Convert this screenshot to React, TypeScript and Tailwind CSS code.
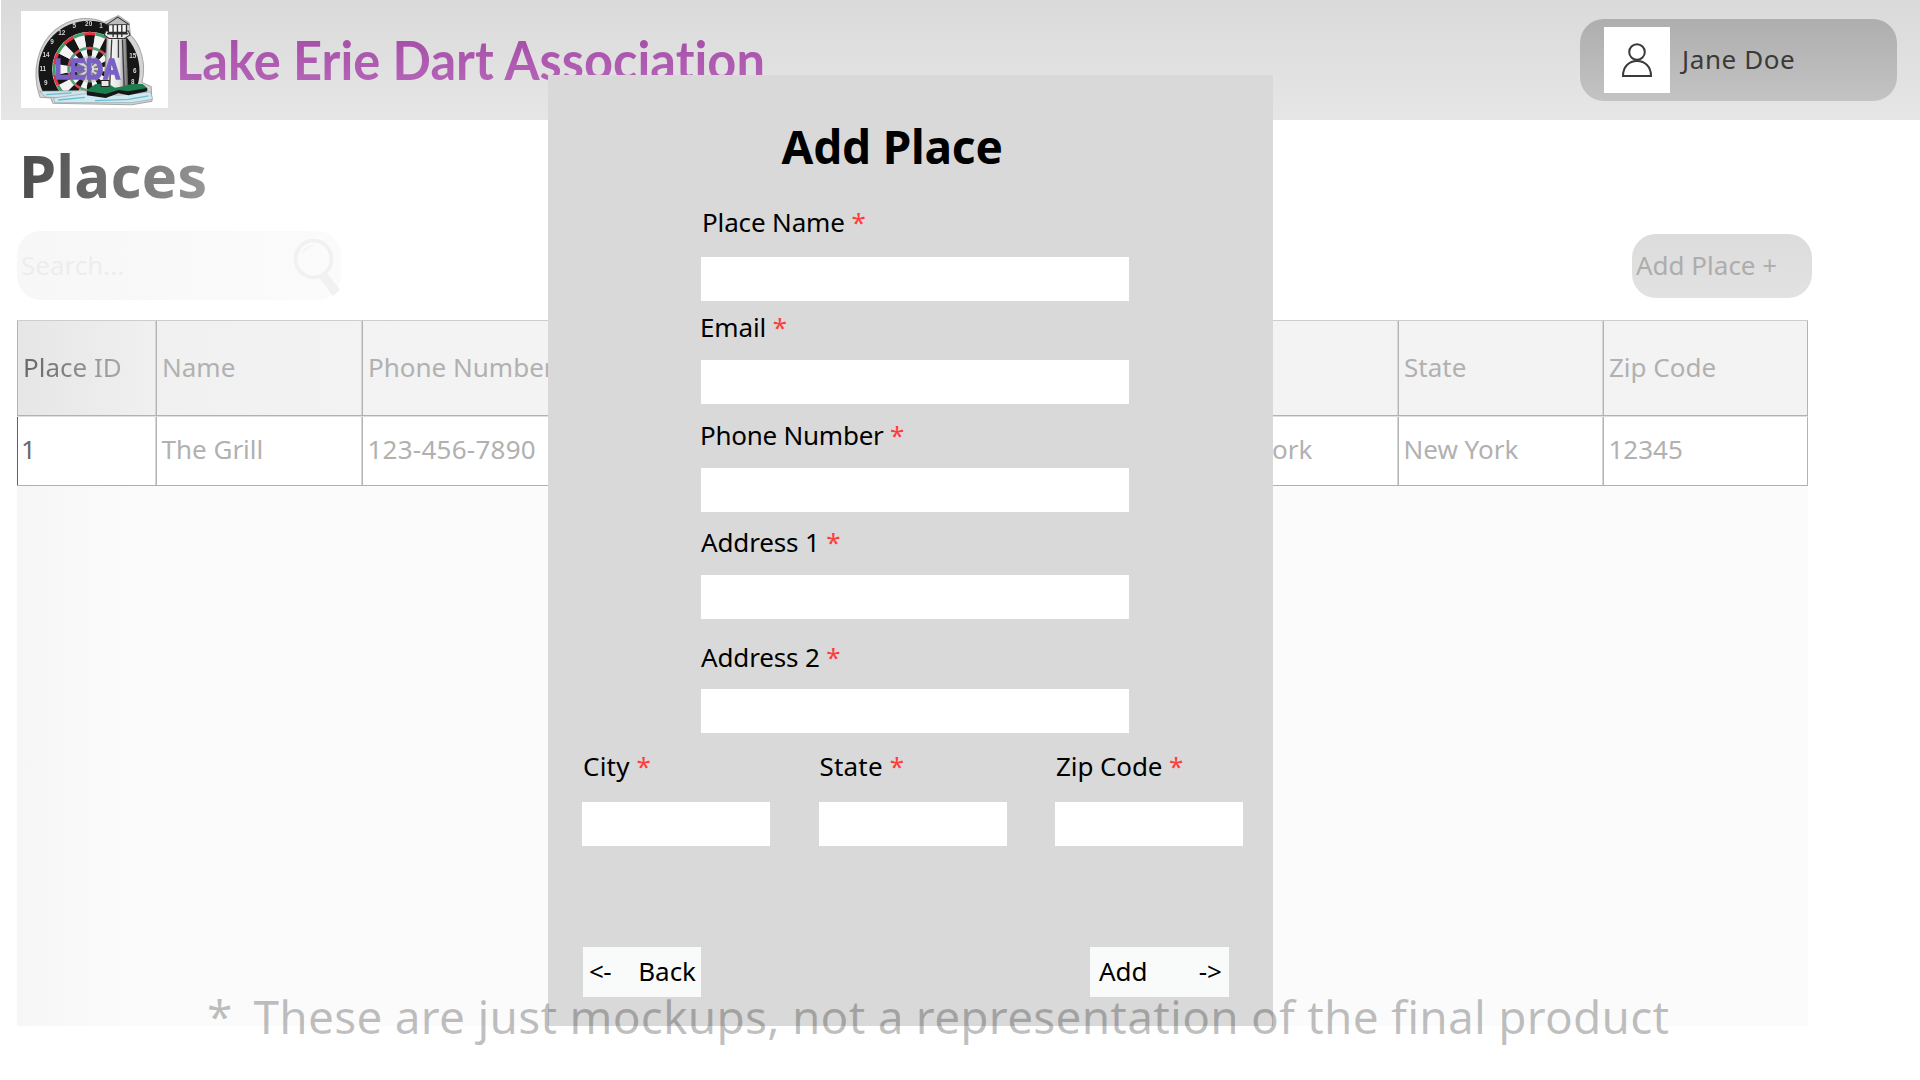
import React from 'react';

const wedges = Array.from({ length: 20 }, (_, i) => i);

function wedgePath(i: number, inner: number, outer: number) {
  const a0 = ((i * 18 - 9) * Math.PI) / 180;
  const a1 = ((i * 18 + 9) * Math.PI) / 180;
  const p = (r: number, a: number) => `${(Math.sin(a) * r).toFixed(1)} ${(-Math.cos(a) * r).toFixed(1)}`;
  return `M${p(inner, a0)}L${p(outer, a0)}A${outer} ${outer} 0 0 1 ${p(outer, a1)}L${p(inner, a1)}A${inner} ${inner} 0 0 0 ${p(inner, a0)}Z`;
}

const rimNumbers = [
  { n: '9', x: 83, y: 232 },
  { n: '11', x: 74, y: 190 },
  { n: '14', x: 84, y: 147 },
  { n: '9', x: 102, y: 110 },
  { n: '12', x: 131, y: 82 },
  { n: '5', x: 168, y: 61 },
  { n: '20', x: 211, y: 56 },
  { n: '1', x: 248, y: 60 },
  { n: '15', x: 343, y: 152 },
  { n: '6', x: 349, y: 194 },
  { n: '8', x: 343, y: 228 },
];

function Logo() {
  return (
    <svg viewBox="9 10 439 290" preserveAspectRatio="none" className="h-[97px] w-[147px] shrink-0 bg-white">
      <defs>
        <linearGradient id="tower" x1="0" x2="1" y1="0" y2="0">
          <stop offset="0" stopColor="#8f8f8f" />
          <stop offset="0.3" stopColor="#f6f6f6" />
          <stop offset="0.65" stopColor="#e2e2e2" />
          <stop offset="1" stopColor="#6c6c6c" />
        </linearGradient>
        <clipPath id="board">
          <rect x="40" y="20" width="350" height="230" />
        </clipPath>
        <filter id="soft">
          <feGaussianBlur stdDeviation="1.8" />
        </filter>
      </defs>
      <g filter="url(#soft)">
        <path
          d="M62 256C42 190 58 110 112 66C160 28 215 24 258 44L300 24L332 46L336 82C368 112 384 170 370 224L398 236L400 280L340 290L104 286L98 270L66 268Z"
          fill="#d4d4d4"
          stroke="#a8a8a8"
          strokeWidth="3"
        />
        <g clipPath="url(#board)">
          <circle cx="212" cy="190" r="151" fill="#131313" />
          <g transform="translate(214 184)">
            <circle r="112" fill="#efefef" />
            {wedges.map((i) => (
              <g key={i}>
                <path d={wedgePath(i, 12, 106)} fill={i % 2 === 0 ? '#161616' : '#f4f4f4'} />
                <path d={wedgePath(i, 102, 111)} fill={i % 2 === 0 ? '#e2323f' : '#3f9f68'} />
                <path d={wedgePath(i, 59, 67)} fill={i % 2 === 0 ? '#d94450' : '#4fa474'} />
              </g>
            ))}
            <circle r="40" fill="#bdbdbd" opacity="0.6" />
            <circle r="13" fill="#ddd" />
            <circle r="6" fill="#444" />
          </g>
        </g>
        {rimNumbers.map((r, i) => (
          <text key={i} x={r.x} y={r.y} textAnchor="middle" fontSize="19" fontWeight="700" fill="#d8d8d8" fontFamily="Liberation Sans">
            {r.n}
          </text>
        ))}
        <path d="M64 250L200 248L215 262L190 270L84 268Z" fill="#cfe3ea" stroke="#8d9aa0" strokeWidth="2" />
        <path d="M106 270L210 256L300 262L396 252L402 274L340 284L110 284Z" fill="#cde9f1" stroke="#9aa5a8" strokeWidth="2" />
        <path d="M120 276L200 268M230 278L330 274L390 264M84 260L160 255" stroke="#6cbccd" strokeWidth="4" fill="none" />
        <path d="M266 88L256 240H328L322 88Z" fill="url(#tower)" stroke="#777" strokeWidth="2" />
        <path d="M280 95L274 232M300 95V150M312 95L317 235" stroke="#3b3b3b" strokeWidth="4" />
        <path d="M258 82L262 70L330 70L334 82L318 92H272Z" fill="#e9e9e9" stroke="#333" strokeWidth="3" />
        <path d="M270 50H324V74H270ZM284 50V88M297 50V90M310 50V88M266 78H328" fill="#f4f4f4" stroke="#2a2a2a" strokeWidth="4" />
        <path d="M262 52L298 28L330 50Z" fill="#bcbcbc" stroke="#333" strokeWidth="3" />
        <path d="M206 246L232 228H272L290 240L340 228H372L386 240L380 250L330 256L300 252L262 264L206 258Z" fill="#1d7e50" />
        <path d="M206 250L262 258L300 246L330 250L386 240V250L330 262L300 256L262 270L206 262Z" fill="#141414" />
        <path d="M248 218H272V236H248Z" fill="#e8e8e8" stroke="#222" strokeWidth="3" />
        <text
          x="110"
          y="214"
          textLength="196"
          lengthAdjust="spacingAndGlyphs"
          fontSize="89"
          fontWeight="700"
          fill="#7a62c4"
          stroke="#7a62c4"
          strokeWidth="5"
          fontFamily="Liberation Sans"
        >
          LEDA
        </text>
      </g>
    </svg>
  );
}

function UserIcon() {
  return (
    <svg viewBox="0 0 66 66" className="h-[66px] w-[66px] shrink-0 bg-white" fill="none" stroke="#3a3a3a" strokeWidth="2">
      <circle cx="33" cy="25" r="7.8" />
      <path d="M19 49C19 39.5 25 34 33 34S47 39.5 47 49Z" />
    </svg>
  );
}

function Magnifier() {
  return (
    <svg viewBox="0 0 48 58" className="mt-0.5 h-[58px] w-12">
      <ellipse cx="20.5" cy="21" rx="18" ry="18.5" fill="none" stroke="#f1f1f1" strokeWidth="3.6" />
      <path d="M8 17C11 10 15 8 21 6.5C15 10 12 12 8 17Z" fill="#f1f1f1" />
      <path d="M26 39.5L34 35L47 52L40 58Z" fill="#f1f1f1" />
    </svg>
  );
}

const columns = [
  { head: 'Place ID', value: '1' },
  { head: 'Name', value: 'The Grill' },
  { head: 'Phone Number', value: '123-456-7890' },
  { head: 'Email', value: '' },
  { head: 'Address 1', value: '' },
  { head: 'Address 2', value: '' },
  { head: 'City', value: 'New York' },
  { head: 'State', value: 'New York' },
  { head: 'Zip Code', value: '12345' },
];

const tableGrid = 'grid grid-cols-[139px_206px_206px_208px_208px_208px_206px_205px_205px]';

function PlacesTable() {
  return (
    <div className="mt-[20px] h-[706px] w-[1791px] bg-[linear-gradient(90deg,#f6f6f6,#f9f9f9_60px,#fbfbfb_140px)]">
      <div className={`${tableGrid} h-24 border-b border-t border-b-[#b2b2b2] border-t-[#cdcdcd] bg-[linear-gradient(90deg,#e6e6e6,#f1f1f1_150px,#f3f3f3_400px)]`}>
        {columns.map((c, i) => (
          <div key={c.head} className="flex items-center border-l border-r border-l-[#b4b4b4] border-r-[#d6d6d6] pb-0.5 pl-[5px] last:border-r-[#b4b4b4]">
            <span className={i === 0 ? 'whitespace-nowrap bg-[linear-gradient(90deg,#666,#a8a8a8)] bg-clip-text text-transparent' : 'whitespace-nowrap text-[#b1b1b1]'}>{c.head}</span>
          </div>
        ))}
      </div>
      <div className={`${tableGrid} h-[70px] border-b border-t border-b-[#b0b0b0] border-t-[#dedede] bg-white`}>
        {columns.map((c, i) => (
          <div key={c.head} className={i === 0 ? 'flex items-center border-l border-r border-l-[#606060] border-r-[#d6d6d6] pl-[3px] text-[#6a6a6a]' : 'flex items-center border-l border-r border-l-[#b4b4b4] border-r-[#d6d6d6] pl-[4.5px] text-[#b1b1b1] last:border-r-[#b4b4b4]'}>
            <span className={i === 2 ? 'whitespace-nowrap pb-1 tracking-[0.25px]' : 'whitespace-nowrap pb-1'}>{c.value}</span>
          </div>
        ))}
      </div>
    </div>
  );
}

function Label({ text, className }: { text: string; className: string }) {
  return (
    <div className={`whitespace-nowrap leading-9 text-black ${className}`}>
      {text} <span className="text-[#ff3b3b]">*</span>
    </div>
  );
}

function AddPlaceDialog() {
  return (
    <div className="absolute left-[548px] top-[75px] flex h-[950.5px] w-[724.5px] flex-col bg-[#d9d9d9]">
      <h2 className="ml-[233.5px] mt-[39px] text-[46px] font-bold leading-[64px] -tracking-[0.2px] text-black">Add Place</h2>
      <div className="ml-[153px] w-[428px]">
        <Label text="Place Name" className="ml-px mt-[26px] -tracking-[0.15px]" />
        <div className="mt-[17px] h-11 bg-white" />
        <Label text="Email" className="-ml-px mt-2 -tracking-[0.15px]" />
        <div className="mt-[15px] h-11 bg-white" />
        <Label text="Phone Number" className="-ml-px mt-[13px] -tracking-[0.25px]" />
        <div className="mt-[15px] h-11 bg-white" />
        <Label text="Address 1" className="mt-3 -tracking-[0.15px]" />
        <div className="mt-[15px] h-11 bg-white" />
        <Label text="Address 2" className="mt-5 -tracking-[0.15px]" />
        <div className="mt-[14px] h-11 bg-white" />
      </div>
      <div className="ml-[34px] mt-[15px] grid grid-cols-[188px_188px_188px] gap-x-[48.5px]">
        {['City', 'State', 'Zip Code'].map((t) => (
          <div key={t}>
            <Label text={t} className={t === 'Zip Code' ? 'ml-px -tracking-[0.1px]' : 'ml-px tracking-[0.2px]'} />
            <div className="mt-[18px] h-11 bg-white" />
          </div>
        ))}
      </div>
      <div className="ml-[35px] mr-[43.5px] mt-[101px] flex justify-between text-black">
        <button className="flex h-[50px] w-[118px] items-center justify-between bg-[#f9fbfa] pb-0.5 pl-1.5 pr-[5px]">
          <span className="tracking-[-0.5px]">&lt;-</span>
          <span>Back</span>
        </button>
        <button className="flex h-[50px] w-[139px] items-center justify-between bg-[#f9fbfa] pb-0.5 pl-[9px] pr-[7px]">
          <span>Add</span>
          <span>-&gt;</span>
        </button>
      </div>
    </div>
  );
}

export default function App() {
  return (
    <div className="relative h-[1080px] w-[1920px] overflow-hidden bg-white font-['Noto_Sans',sans-serif] text-[26px] leading-9">
      <header className="ml-px flex h-[120px] items-start bg-linear-to-b from-[#dadada] to-[#e6e6e6] pl-5">
        <div className="mt-[11px]">
          <Logo />
        </div>
        <h1 className="ml-2 mt-[27px] origin-left scale-x-[0.937] whitespace-nowrap bg-linear-to-b from-[#a650a8] from-20% to-[#b768bb] bg-clip-text font-['Lato',sans-serif] text-[54px] font-bold leading-[65px] text-transparent [font-variant-ligatures:none]">
          Lake Erie Dart Association
        </h1>
        <div className="ml-auto mr-[23px] mt-[19px] flex h-[82px] w-[317px] items-center rounded-[24px] bg-linear-to-b from-[#aeaeae] to-[#c3c3c3] pl-6">
          <UserIcon />
          <span className="ml-3 pb-[3px] tracking-[0.6px] text-[#3a3a3a]">Jane Doe</span>
        </div>
      </header>
      <main className="pl-[17px]">
        <h2 className="ml-0.5 mt-3.5 w-[191px] bg-[linear-gradient(100deg,#484848,#9a9a9a)] bg-clip-text text-[60px] font-bold leading-[82px] tracking-[0.1px] text-transparent">Places</h2>
        <div className="mt-[15px] flex w-[1795px] items-start justify-between">
          <div className="flex h-[69px] w-[324px] items-center justify-between rounded-[24px] bg-[linear-gradient(90deg,#f7f7f7,#fbfbfb)] pl-1 pr-0">
            <span className="pb-0.5 text-[#ededed]">Search...</span>
            <Magnifier />
          </div>
          <button className="mt-[2.5px] flex h-16 w-[180px] items-center rounded-[24px] bg-linear-to-b from-[#dcdcdc] to-[#e2e2e2] pb-0.5 pl-1 text-[#adadad]">
            Add Place +
          </button>
        </div>
        <PlacesTable />
      </main>
      <AddPlaceDialog />
      <p className="absolute left-[207px] top-[984px] flex gap-[21px] whitespace-nowrap text-[46px] leading-[64px] tracking-[0.22px] text-black/25">
        <span>*</span>
        <span>These are just mockups, not a representation of the final product</span>
      </p>
    </div>
  );
}
